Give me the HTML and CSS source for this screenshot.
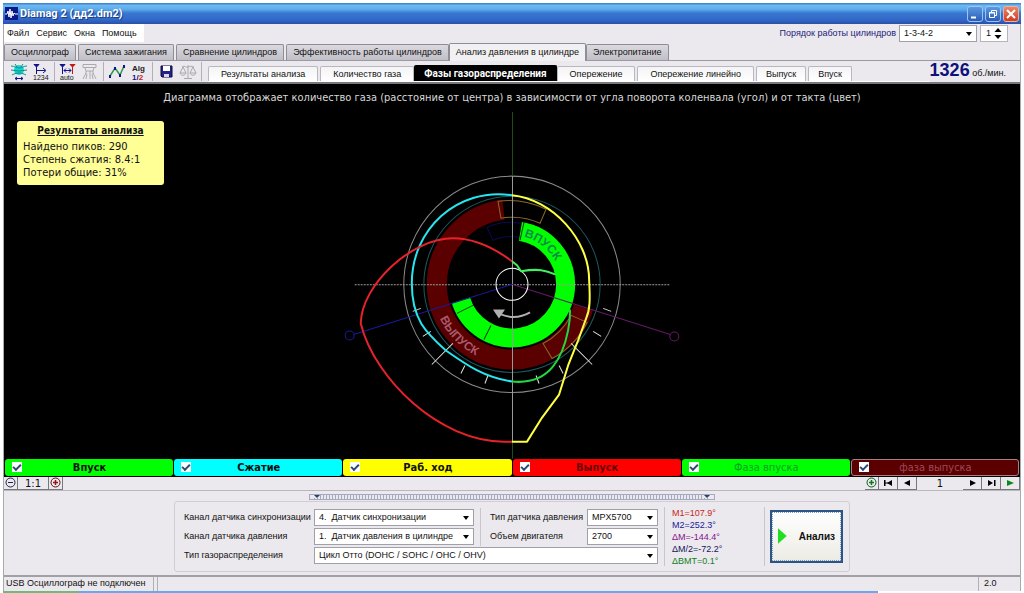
FILE: index.html
```
<!DOCTYPE html>
<html lang="ru">

<head>
    <meta charset="utf-8">
    <meta name="viewport" content="width=device-width, initial-scale=1.0">
    <title>Diamag 2 (дд2.dm2)</title>
    <link rel="stylesheet" href="styles.css">
</head>

<body>
    <div class="window">
        <header class="titlebar">
            <svg class="logo" width="13" height="13" viewBox="0 0 13 13">
                <rect width="13" height="13" fill="#0a1a8a" />
                <path d="M0 7h2l1-3 1 6 1-8 1 9 1-7 1 5 1-3 1 1h3" fill="none" stroke="#fff" />
            </svg>
            <h1>Diamag 2 (дд2.dm2)</h1>
            <button class="win-btn" aria-label="Свернуть">
                <svg width="14" height="14" viewBox="0 0 14 14"><path d="M3 10.500h5" stroke="#fff" stroke-width="2" /></svg>
            </button>
            <button class="win-btn" aria-label="Развернуть">
                <svg width="14" height="14" viewBox="0 0 14 14"><path d="M5.500 5V3.500h5v5H9M3.500 5.500h5v5h-5zM3 6h6" fill="none" stroke="#fff" /></svg>
            </button>
            <button class="win-btn close" aria-label="Закрыть">
                <svg width="14" height="14" viewBox="0 0 14 14"><path d="M3 3l8 8M11 3l-8 8" stroke="#fff" stroke-width="2" /></svg>
            </button>
        </header>

        <div class="menubar">
            <nav class="menu">
                <button>Файл</button>
                <button>Сервис</button>
                <button>Окна</button>
                <button>Помощь</button>
            </nav>
            <div class="order">
                <label for="order">Порядок работы цилиндров</label>
                <span class="combo order-combo"><select id="order"><option>1-3-4-2</option></select></span>
                <span class="spin">
                    <input type="text" value="1" aria-label="Цилиндр">
                    <svg width="8" height="11" viewBox="0 0 8 11"><path d="M4 0l3.500 4h-7zM4 11l3.500-4h-7z" /></svg>
                </span>
            </div>
        </div>

        <nav class="tabs">
            <button class="tab">Осциллограф</button>
            <button class="tab">Система зажигания</button>
            <button class="tab">Сравнение цилиндров</button>
            <button class="tab">Эффективность работы цилиндров</button>
            <button class="tab active">Анализ давления в цилиндре</button>
            <button class="tab">Электропитание</button>
        </nav>

        <div class="toolbar">
            <div class="tools">
                <button aria-label="Синхронизация">
                    <svg width="18" height="18" viewBox="0 0 18 18">
                        <ellipse cx="9" cy="7" rx="5" ry="5" fill="#19d3d3" />
                        <path d="M1 3c4 0 4 2 8 2s4-2 8-2M1 7c3 0 5 1 8 1s5-1 8-1M2 12c2-1 4-2 7-2s5 1 7 2M5 1l2 3M13 1l-2 3" fill="none" stroke="#0b8f86" />
                        <path d="M5 15.500h8M7 14l-2 1.500L7 17M11 14l2 1.500-2 1.500" fill="none" stroke="#12128a" />
                    </svg>
                </button>
                <button aria-label="Порядок 1234">
                    <svg width="18" height="18" viewBox="0 0 18 18">
                        <path d="M2 1.500h5L4.500 4z" fill="#12128a" stroke="#12128a" />
                        <path d="M4.500 4v7M5 7.500h8M11 5l3 2.500L11 10" fill="none" stroke="#12128a" />
                        <text class="tiny" x="1" y="17">1234</text>
                    </svg>
                </button>
                <i class="sep"></i>
                <button aria-label="Авто">
                    <svg width="18" height="18" viewBox="0 0 18 18">
                        <path d="M1 1.500h5L3.500 4zM3.500 4v7" fill="#12128a" stroke="#12128a" />
                        <path d="M11 1.500h5L13.500 4zM13.500 4v7" fill="#c01818" stroke="#c01818" />
                        <path d="M5 7.500h7M7 5.500l-2 2 2 2M10 5.500l2 2-2 2" fill="none" stroke="#12128a" />
                        <text class="tiny" x="1" y="17">auto</text>
                    </svg>
                </button>
                <button aria-label="Форсунка" disabled>
                    <svg width="18" height="18" viewBox="0 0 18 18"><path d="M2 1.500h13v3H2zM4 5l1 3h7l1-3M5 8v3M9 8v8M12 8v3M5 10l-3 6M6 11l-1 5M12 10l3 6M11 11l1 5" fill="none" stroke="#aaaaae" /></svg>
                </button>
                <i class="sep"></i>
                <button aria-label="График">
                    <svg width="18" height="18" viewBox="0 0 18 18">
                        <path d="M2 13l5-8 5 7 4-9" fill="none" stroke="#2a9a4a" stroke-width="1.500" />
                        <path d="M1 12h2v3H1zM6 4h2v3H6zM11 11h2v3h-2zM15 2h2v3h-2z" fill="#12128a" />
                    </svg>
                </button>
                <button aria-label="Алгоритм">
                    <svg width="18" height="18" viewBox="0 0 18 18">
                        <text class="alg" x="2" y="8">Alg</text>
                        <text class="alg num" x="2" y="17">1/<tspan fill="#d01818">2</tspan></text>
                    </svg>
                </button>
                <i class="sep"></i>
                <button aria-label="Сохранить">
                    <svg width="18" height="18" viewBox="0 0 18 18">
                        <path d="M4 3h11v11H5l-1-1z" fill="#22228a" stroke="#0b0b3c" />
                        <path d="M6 3h7v5H6z" fill="#fff" />
                        <path d="M7 11h5v3H7z" fill="#d8d8e0" />
                    </svg>
                </button>
                <button aria-label="Весы" disabled>
                    <svg width="18" height="18" viewBox="0 0 18 18"><path d="M9 2v13M5 15.500h8M3 4c3-2 4 1 6 0s4-1 6 0M4 4l-3 6h6zM14 4l-3 6h6zM1 10c1 3 5 3 6 0M11 10c1 3 5 3 6 0" fill="none" stroke="#a8a8ac" /></svg>
                </button>
                <i class="sep"></i>
            </div>
            <nav class="subtabs">
                <button class="subtab wide">Результаты анализа</button>
                <button class="subtab wide">Количество газа</button>
                <button class="subtab current">Фазы газораспределения</button>
                <button class="subtab wide">Опережение</button>
                <button class="subtab wide">Опережение линейно</button>
                <button class="subtab">Выпуск</button>
                <button class="subtab">Впуск</button>
            </nav>
            <p class="rpm"><b>1326</b> об./мин.</p>
        </div>

        <main class="scope">
            <p class="caption">Диаграмма отображает количество газа (расстояние от центра) в зависимости от угла поворота коленвала (угол) и от такта (цвет)</p>
            <!-- origin is the crankshaft centre -->
            <svg class="diagram" viewBox="-507 -172 1014 346">
                <defs>
                    <path id="arc-in" d="M12-47.500A49 49 0 0 1 46-17" />
                    <path id="arc-out" d="M-72 34A79.500 79.500 0 0 0-20 77" />
                    <g id="ticks">
                        <path d="M24 91l3 8M47 81l4 8M59 59l21 21M81 47l8 5M91 24l8 3" />
                    </g>
                </defs>

                <!-- valve phases -->
                <path class="ring-out" d="M71.300 23.200A75 75 0 1 1-8.500-74.500" />
                <path class="ring-in" d="M8.400-52.800A53.500 53.500 0 1 1-51 16.100" />
                <path class="split" d="M12-62l-4 18M-55 29l16-8M-28 55l7-14" />
                <path class="box-out" d="M-14-83A84 84 0 0 1 34-75l-6 14A67 67 0 0 0-11-66z" />
                <path class="box-out" d="M59 31l16 7A84 84 0 0 1 40 74L31 59A67 67 0 0 0 59 31z" />
                <path class="box-in" d="M-25-57A62 62 0 0 1 9-61M-19-44A48 48 0 0 1 7-47M-25-57l6 13" />

                <circle class="grid-outer" r="108" />
                <circle class="grid-teal" r="88" />
                <path class="axis-green" d="M.5-172v346" />
                <path class="axis" d="M.5-108v265" />
                <path class="axis dotted" d="M-157 .5h314" />
                <path class="mark-1" d="M0 0l-158 50" />
                <circle class="mark-1" cx="-162" cy="51" r="4.500" />
                <path class="mark-2" d="M0 0l158 50" />
                <circle class="mark-2" cx="162" cy="52" r="4.500" />
                <circle class="hub" r="16" />
                <use class="tick" href="#ticks" />
                <use class="tick" href="#ticks" transform="scale(-1 1)" />

                <!-- gas amount per stroke -->
                <path class="curve" stroke="#26e6f0" d="M0-89C-55-97-100-55-100-1-100 35-86 48-66 66-46 80-28 93 0 97" />
                <path class="curve" stroke="#e8222a" d="M0-23C-20-38-38-46-59-46-100-46-150 0-151 39-137 95-72 157-8 157H0" />
                <path class="curve" stroke="#ffff40" d="M0-89C40-85 77-45 77-4 78 15 78 25 74 34L66 56 56 81 47 110 30 133 15 157H0" />
                <path class="curve" stroke="#20d840" d="M0 97C20 99 33 92 41 82S54 56 56 46 58 30 58 25" />
                <path class="curve" stroke="#40f060" d="M43-10C34-14 26-16 9-13L5-19 0-23" />

                <text class="ring-label in"><textPath href="#arc-in">ВПУСК</textPath></text>
                <text class="ring-label out"><textPath href="#arc-out">ВЫПУСК</textPath></text>
                <path class="turn" d="M18 28Q4 36-11 30" />
                <path d="M-19 25l12 0-6 9z" fill="#b0b0b0" />
            </svg>

            <aside class="results">
                <h2>Результаты анализа</h2>
                <p>Найдено пиков: 290</p>
                <p>Степень сжатия: 8.4:1</p>
                <p>Потери общие: 31%</p>
            </aside>
        </main>

        <div class="legend">
            <label class="stroke intake"><input type="checkbox" checked><span>Впуск</span></label>
            <label class="stroke compression"><input type="checkbox" checked><span>Сжатие</span></label>
            <label class="stroke power"><input type="checkbox" checked><span>Раб. ход</span></label>
            <label class="stroke exhaust"><input type="checkbox" checked><span>Выпуск</span></label>
            <label class="stroke phase-in"><input type="checkbox" checked><span>Фаза впуска</span></label>
            <label class="stroke phase-out"><input type="checkbox" checked><span>фаза выпуска</span></label>
        </div>

        <div class="pager">
            <button aria-label="Уменьшить"><svg width="11" height="11" viewBox="0 0 11 11"><circle cx="5.500" cy="5.500" r="4.500" fill="none" stroke="#22224a" /><path d="M3 5.500h5" stroke="#22224a" /></svg></button>
            <button class="scale">1:1</button>
            <button aria-label="Увеличить"><svg width="11" height="11" viewBox="0 0 11 11"><circle cx="5.500" cy="5.500" r="4.500" fill="none" stroke="#5a1010" /><path d="M3 5.500h5M5.500 3v5" stroke="#a01010" stroke-width="1.500" /></svg></button>
            <span class="space"></span>
            <button aria-label="Добавить"><svg width="11" height="11" viewBox="0 0 11 11"><circle cx="5.500" cy="5.500" r="4.500" fill="none" stroke="#0a5a1a" /><path d="M3 5.500h5M5.500 3v5" stroke="#0a7a1a" stroke-width="1.500" /></svg></button>
            <button class="step" aria-label="В начало"><svg width="9" height="8" viewBox="0 0 9 8"><path d="M0 1h1.500v6H0zM8 1v6L3 4z" /><path d="M1 4h4" stroke="#000" /></svg></button>
            <button class="step" aria-label="Назад"><svg width="9" height="8" viewBox="0 0 9 8"><path d="M7 1v6L1 4z" /></svg></button>
            <output class="page">1</output>
            <button class="step" aria-label="Вперёд"><svg width="9" height="8" viewBox="0 0 9 8"><path d="M2 1v6l6-3z" /></svg></button>
            <button class="step" aria-label="В конец"><svg width="9" height="8" viewBox="0 0 9 8"><path d="M1 1v6l5-3zM7 1h1.500v6H7z" /></svg></button>
            <button class="step" aria-label="Пуск"><svg width="9" height="8" viewBox="0 0 9 8"><path d="M1 1v6l7-3z" fill="#0a8a1a" /></svg></button>
        </div>

        <div class="splitter"><div class="grip"></div></div>

        <section class="panel">
            <div class="fields">
                <label for="sync">Канал датчика синхронизации</label>
                <span class="combo"><select id="sync"><option>4.&nbsp; Датчик синхронизации</option></select></span>
                <label class="second" for="sensor">Тип датчика давления</label>
                <span class="combo"><select id="sensor"><option>MPX5700</option></select></span>

                <label for="pressure">Канал датчика давления</label>
                <span class="combo"><select id="pressure"><option>1.&nbsp; Датчик давления в цилиндре</option></select></span>
                <label class="second" for="volume">Объем двигателя</label>
                <span class="combo"><select id="volume"><option>2700</option></select></span>

                <label for="cycle">Тип газораспределения</label>
                <span class="combo long"><select id="cycle"><option>Цикл Отто (DOHC / SOHC / OHC / OHV)</option></select></span>
            </div>
            <ul class="angles">
                <li class="m1">M1=107.9°</li>
                <li class="m2">M2=252.3°</li>
                <li class="dm">ΔM=-144.4°</li>
                <li class="dm2">ΔM/2=-72.2°</li>
                <li class="tdc">ΔВМТ=0.1°</li>
            </ul>
            <div class="run-box">
                <button class="run"><svg width="9" height="16" viewBox="0 0 9 16"><path d="M0 0l9 8-9 8z" fill="#1fe01f" /></svg>Анализ</button>
            </div>
        </section>

        <footer class="status">
            <span class="usb">USB Осциллограф не подключен</span>
            <span class="message"></span>
            <span class="version">2.0</span>
        </footer>
    </div>
    <div class="taskbar"></div>
</body>

</html>
```
FILE: styles.css
```
* {
    box-sizing: border-box;
}

body {
    margin: 3px 3px 0;
    background: #fff;
    font-family: "Liberation Sans", Arial, sans-serif;
    font-size: 9px;
    line-height: 13px;
    color: #111;
}

button,
input,
select {
    font: inherit;
    color: inherit;
    margin: 0;
    padding: 0;
    border: 0;
    background: none;
}

h1,
h2,
p,
ul {
    margin: 0;
    padding: 0;
    list-style: none;
}

svg {
    display: block;
}

.window {
    background: #ebe9ed;
    border-right: 1px solid #a8a8b0;
    border-left: 1px solid #a8a8b0;
}

/* title bar */
.titlebar {
    display: flex;
    align-items: center;
    gap: 2px;
    height: 21px;
    margin: 0 -1px;
    padding: 0 2px;
    background: linear-gradient(#3a78c8, #6cb8f0 12%, #5cacec 30%, #3878d0 48%, #3268c8 80%, #2a50a8);
}

.titlebar h1 {
    flex: 1;
    font-family: Roboto, sans-serif;
    font-size: 11px;
    font-weight: bold;
    color: #fff;
    text-shadow: 1px 1px #1c3c80;
}

.win-btn {
    display: grid;
    place-items: center;
    width: 16px;
    height: 16px;
    border: 1px solid #9cc4f4;
    border-radius: 3px;
    background: linear-gradient(#5a9ae0, #2a5cb8);
}

.win-btn.close {
    border-color: #f0b0a0;
    background: linear-gradient(#e88868, #d03c20);
}

/* menu */
.menubar {
    display: flex;
    justify-content: space-between;
    height: 20px;
}

.menu {
    display: flex;
    align-items: center;
    gap: 7px;
    height: 18px;
    padding: 0 7px 0 3px;
    background: #fff;
}

.order {
    display: flex;
    align-items: center;
    gap: 3px;
    padding: 0 12px 2px 0;
    color: #1c1c7c;
}

.combo {
    position: relative;
    display: block;
}

.combo select {
    display: block;
    width: 100%;
    height: 17px;
    padding: 0 12px 0 4px;
    border: 1px solid #a0a0a8;
    background: #fff;
    color: #111;
    appearance: none;
}

.combo::after {
    content: "";
    position: absolute;
    top: 7px;
    right: 5px;
    border: 3px solid transparent;
    border-top: 4px solid #000;
    border-bottom: 0;
    pointer-events: none;
}

.order-combo {
    width: 78px;
}

.spin {
    display: flex;
    align-items: center;
    width: 28px;
    height: 17px;
    padding: 0 5px;
    border: 1px solid #b4b4bc;
    background: #fff;
    color: #111;
}

.spin input {
    flex: 1;
    min-width: 0;
}

/* tabs */
.tabs {
    display: flex;
    align-items: flex-end;
    gap: 2px;
    height: 17px;
    border-bottom: 1px solid #9a9aa0;
}

.tab {
    height: 16px;
    padding: 0 6px;
    border: 1px solid #8e8e94;
    border-bottom: 0;
    border-radius: 2px 2px 0 0;
    background: linear-gradient(#dcdae0, #c0bec6);
    white-space: nowrap;
}

.tab.active {
    height: 18px;
    margin: 0 -2px -1px;
    background: #f1f0f3;
}

/* toolbar */
.toolbar {
    display: flex;
    justify-content: space-between;
    height: 23px;
    border-bottom: 2px solid #77777c;
}

.tools {
    display: flex;
    align-items: center;
    gap: 4px;
    padding: 0 6px;
}

.sep {
    width: 1px;
    height: 19px;
    background: #b0b0b6;
}

.tiny {
    font-size: 7px;
    fill: #111;
}

.alg {
    font: bold 8px "Liberation Sans", sans-serif;
    fill: #222;
}

.alg.num {
    fill: #12128a;
}

.subtabs {
    display: flex;
    flex: 1;
    align-items: flex-end;
    gap: 2px;
    border-bottom: 1px solid #fff;
}

.subtab {
    height: 15px;
    padding: 0 9px;
    border: 1px solid #b8b8be;
    border-bottom: 0;
    border-radius: 2px 2px 0 0;
    background: linear-gradient(#f4f4f6, #fff);
    white-space: nowrap;
}

.subtab.wide {
    padding: 0 12px;
}

.subtab.current {
    height: 16px;
    margin: 0 -2px;
    border-color: #000;
    background: #000;
    color: #fff;
    font-family: Roboto, sans-serif;
    font-size: 10px;
    font-weight: bold;
}

.rpm {
    align-self: center;
    padding-right: 14px;
    white-space: nowrap;
}

.rpm b {
    font-size: 18px;
    color: #10107c;
}

/* diagram */
.scope {
    position: relative;
    background: #000;
}

.caption {
    height: 28px;
    padding-top: 7px;
    font-family: "DejaVu Sans Condensed", "DejaVu Sans", sans-serif;
    font-size: 11px;
    color: #d8d8d8;
    text-align: center;
}

.diagram {
    width: 100%;
    height: auto;
    fill: none;
}

.ring-out {
    stroke: #5a0000;
    stroke-width: 20;
}

.ring-in {
    stroke: #00ff00;
    stroke-width: 19;
}

.split {
    stroke: #043a04;
}

.box-out {
    stroke: #8a6a28;
}

.box-in {
    stroke: #0a0a50;
}

.grid-outer {
    stroke: #8a8a8a;
}

.grid-teal {
    stroke: #1c5a60;
}

.axis-green {
    stroke: #185018;
}

.axis {
    stroke: #9a9a9a;
}

.dotted {
    stroke-dasharray: 2 1;
}

.mark-1 {
    stroke: #1a1a9c;
}

.mark-2 {
    stroke: #641a64;
}

.hub {
    stroke: #fff;
}

.tick {
    stroke: #e0e0e0;
}

.curve {
    stroke-width: 2;
    stroke-linejoin: round;
}

.ring-label {
    font: bold 12px "Liberation Sans", sans-serif;
}

.ring-label.in {
    fill: #0a8a4a;
}

.ring-label.out {
    fill: #a85a6a;
}

.turn {
    stroke: #b0b0b0;
    stroke-width: 2;
}

.results {
    position: absolute;
    top: 37px;
    left: 13px;
    width: 147px;
    padding: 3px 6px 6px;
    border-radius: 3px;
    background: #ffff96;
    font-family: "DejaVu Sans Condensed", "DejaVu Sans", sans-serif;
    font-size: 11px;
}

.results h2 {
    margin-bottom: 3px;
    font-size: 10px;
    text-align: center;
    text-decoration: underline;
}

/* legend */
.legend {
    display: grid;
    grid-template-columns: repeat(6, 1fr);
    gap: 1px;
    padding: 0 1px 1px;
    background: #000;
}

.stroke {
    display: flex;
    align-items: center;
    height: 17px;
    padding: 0 8px 0 7px;
    border-radius: 3px;
    font-family: "DejaVu Sans Condensed", "DejaVu Sans", sans-serif;
    font-size: 11px;
    font-weight: bold;
}

.stroke span {
    flex: 1;
    padding-right: 8px;
    text-align: center;
}

.stroke input {
    display: grid;
    place-items: center;
    width: 10px;
    height: 10px;
    background: #fff;
    appearance: none;
}

.stroke input:checked::before {
    content: "";
    width: 6px;
    height: 3px;
    margin-bottom: 2px;
    border: solid #2a4a7a;
    border-width: 0 0 2px 2px;
    transform: rotate(-45deg);
}

.intake {
    background: #00ff00;
}

.compression {
    background: #00ffff;
}

.power {
    background: #ffff00;
}

.exhaust {
    background: #ff0000;
    color: #6a0000;
}

.phase-in {
    background: #00ff00;
    color: #0aa02a;
    font-weight: normal;
}

.phase-out {
    border: 1px solid #a88080;
    background: #5a0000;
    color: #a04858;
    font-weight: normal;
}

/* scale and paging */
.pager {
    display: flex;
    height: 14px;
    border-bottom: 1px solid #b8b8be;
}

.pager button {
    display: grid;
    place-items: center;
    width: 14px;
    border: solid #77777c;
    border-width: 0 1px 1px 0;
}

.pager .scale {
    width: 31px;
    font-family: "DejaVu Sans", sans-serif;
    font-size: 10px;
}

.pager .step {
    width: 19px;
}

.space {
    flex: 1;
}

.page {
    width: 46px;
    font-family: "DejaVu Sans", sans-serif;
    font-size: 10px;
    text-align: center;
}

.splitter {
    height: 10px;
    padding-top: 3px;
}

.grip {
    display: flex;
    justify-content: space-between;
    align-items: center;
    width: 406px;
    height: 6px;
    margin: 0 auto;
    padding: 0 4px;
    border: 1px solid #a4a8c0;
    background: repeating-linear-gradient(90deg, #a4a8c0 0 1px, #ebe9ed 1px 3px) content-box;
}

.grip::before,
.grip::after {
    content: "";
    border: 3px solid transparent;
    border-top: 3px solid #28406a;
    border-bottom: 0;
    background: #ebe9ed;
}

/* settings */
.panel {
    display: flex;
    width: max-content;
    height: 71px;
    margin: 0 auto 3px;
    padding: 0 6px 0 9px;
    border: 1px solid #d0ced4;
    border-radius: 3px;
}

.fields {
    display: grid;
    grid-template-columns: 130px 160px 113px 71px;
    grid-auto-rows: 19px;
    align-content: center;
    align-items: center;
    padding-right: 6px;
    white-space: nowrap;
}

.fields .second {
    padding-left: 9px;
    margin-left: 6px;
    border-left: 1px solid #c8c6cc;
    line-height: 19px;
}

.long {
    grid-column: 2 / -1;
}

.angles {
    width: 100px;
    margin: 5px 0;
    padding-left: 7px;
    border-left: 1px solid #c8c6cc;
    line-height: 12px;
}

.m1 {
    color: #c81e1e;
}

.m2 {
    color: #1a1a9a;
}

.dm {
    color: #86108c;
}

.dm2 {
    color: #14145a;
}

.tdc {
    color: #128022;
}

.run-box {
    display: flex;
    margin: 5px 0;
    padding: 3px 0 3px 5px;
    border-left: 1px solid #c8c6cc;
}

.run {
    display: flex;
    align-items: center;
    gap: 12px;
    width: 73px;
    padding: 0 6px;
    border: 2px solid #2c5484;
    outline: 1px dotted #7c9cc0;
    outline-offset: -3px;
    background: linear-gradient(#fff, #ecebe4);
    font-size: 10px;
    font-weight: bold;
}

/* status bar */
.status {
    display: flex;
    gap: 3px;
    height: 16px;
    border-top: 2px solid #a0a0a6;
}

.usb {
    width: 150px;
    padding-left: 2px;
    border-right: 1px solid #b0b0b6;
}

.message {
    flex: 1;
    border-left: 1px solid #b0b0b6;
    border-right: 1px solid #b0b0b6;
}

.version {
    width: 38px;
    padding-left: 2px;
}

.taskbar {
    height: 3px;
    background: linear-gradient(90deg, #74b878 0 75px, #6aa8ec 75px 86%, #fff 86%);
}
```
